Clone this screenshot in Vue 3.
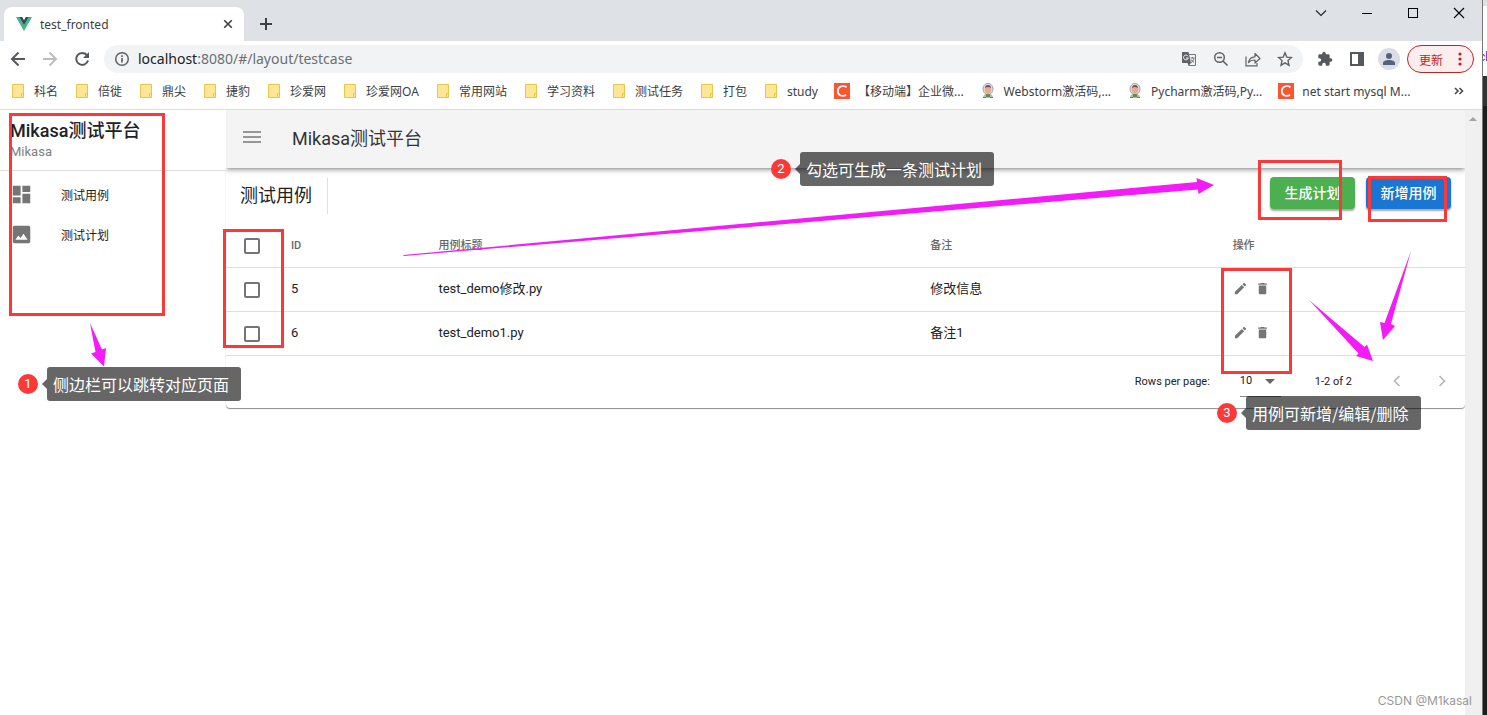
<script setup>
import { ref } from 'vue'

const bookmarks = [
  { kind: 'folder', label: '科名' },
  { kind: 'folder', label: '倍徙' },
  { kind: 'folder', label: '鼎尖' },
  { kind: 'folder', label: '捷豹' },
  { kind: 'folder', label: '珍爱网' },
  { kind: 'folder', label: '珍爱网OA' },
  { kind: 'folder', label: '常用网站' },
  { kind: 'folder', label: '学习资料' },
  { kind: 'folder', label: '测试任务' },
  { kind: 'folder', label: '打包' },
  { kind: 'folder', label: 'study' },
  { kind: 'csdn', label: '【移动端】企业微...' },
  { kind: 'avatar', label: 'Webstorm激活码,...' },
  { kind: 'avatar', label: 'Pycharm激活码,Py...' },
  { kind: 'csdn', label: 'net start mysql M...' },
]

const rows = ref([
  { id: 5, title: 'test_demo修改.py', remark: '修改信息', checked: false },
  { id: 6, title: 'test_demo1.py', remark: '备注1', checked: false },
])
const allChecked = ref(false)
const url = ref('localhost:8080/#/layout/testcase')
const perPage = ref('10')
</script>

<template>
  <div class="desktop">
    <div class="browser">
      <header class="tabstrip">
        <div class="tab">
          <svg class="vue-logo" viewBox="0 0 16 14" aria-hidden="true">
            <path fill="#41b883" d="M0 0h3.2L8 8.3 12.8 0H16L8 14z" />
            <path fill="#35495e" d="M3.2 0h3L8 3.2 9.800 0h3L8 8.300z" />
          </svg>
          <span class="tab-title">test_fronted</span>
          <button class="plain" aria-label="关闭标签页">
            <svg class="i16" viewBox="0 0 16 16"><path d="M4.200 4.200l7.600 7.600M11.800 4.200l-7.600 7.600" stroke="#3c4043" stroke-width="1.600" /></svg>
          </button>
        </div>
        <button class="plain new-tab" aria-label="新标签页">
          <svg class="i16" viewBox="0 0 16 16"><path d="M8 2v12M2 8h12" stroke="#3c4043" stroke-width="2" /></svg>
        </button>
        <div class="window-buttons">
          <button class="plain" aria-label="搜索标签页"><svg class="i16" viewBox="0 0 16 16"><path d="M3 5.500l5 5 5-5" fill="none" stroke="#222" stroke-width="1.100" /></svg></button>
          <button class="plain" aria-label="最小化"><svg class="i16" viewBox="0 0 16 16"><path d="M3 8.500h10" stroke="#000" /></svg></button>
          <button class="plain" aria-label="最大化"><svg class="i16" viewBox="0 0 16 16"><rect x="3.500" y="3.500" width="9" height="9" fill="none" stroke="#000" /></svg></button>
          <button class="plain" aria-label="关闭"><svg class="i16" viewBox="0 0 16 16"><path d="M3 3l10 10M13 3L3 13" stroke="#000" stroke-width="1.100" /></svg></button>
        </div>
      </header>

      <div class="toolbar">
        <button class="plain" aria-label="后退"><svg class="i16" viewBox="0 0 16 16"><path d="M15 8H2M8.500 1.500L2 8l6.500 6.500" fill="none" stroke="#55595e" stroke-width="2" /></svg></button>
        <button class="plain" aria-label="前进"><svg class="i16" viewBox="0 0 16 16"><path d="M1 8h13M7.500 1.500L14 8l-6.500 6.500" fill="none" stroke="#babcbe" stroke-width="2" /></svg></button>
        <button class="plain" aria-label="刷新"><svg class="i16" viewBox="0 0 16 16"><path d="M12.800 4A6 6 0 1 0 14 9.500" fill="none" stroke="#55595e" stroke-width="2" /><path d="M15 1v6H9z" fill="#55595e" /></svg></button>
        <div class="omnibox">
          <svg class="i16" viewBox="0 0 16 16" aria-hidden="true"><circle cx="8" cy="8" r="6.300" fill="none" stroke="#5f6368" stroke-width="1.500" /><path d="M8 7v4.500M8 4.300v1.600" stroke="#5f6368" stroke-width="1.700" /></svg>
          <label class="url"><span class="host">localhost</span><span>{{ url.slice(9) }}</span><input v-model="url" aria-label="地址栏" /></label>
          <div class="omni-actions">
            <button class="plain" aria-label="翻译此页">
              <svg class="i16" viewBox="0 0 16 16"><path d="M7 3.500h7.500v11H8" fill="none" stroke="#74787c" /><path d="M1 1h6.500l2.500 11H1z" fill="#5f6368" /><path d="M10 12l-2.500 3-1-3z" fill="#5f6368" /><path d="M7 5.200A2.400 2.400 0 1 0 7.300 7H5" fill="none" stroke="#f1f3f4" /><path d="M9.500 7h4M11.500 6v1M13 7.500c-.500 2-1.500 3-3 4.200M10.200 8.500c.600 1.300 1.700 2.300 3 3" fill="none" stroke="#5f6368" stroke-width=".9" /></svg>
            </button>
            <button class="plain" aria-label="缩放"><svg class="i16" viewBox="0 0 16 16"><circle cx="6.500" cy="6.500" r="4.800" fill="none" stroke="#5f6368" stroke-width="1.500" /><path d="M10 10l4.500 4.500M4 6.500h5" stroke="#5f6368" stroke-width="1.600" /></svg></button>
            <button class="plain" aria-label="分享"><svg class="i16" viewBox="0 0 16 16"><path d="M1 5.500v9.300h11V12" fill="none" stroke="#5f6368" stroke-width="1.200" /><path d="M3.500 11.500c.500-4 3-5.500 6.500-5.700V2.500l5 5-5 4.500V9c-3 0-5 .7-6.500 2.500z" fill="none" stroke="#5f6368" stroke-width="1.200" stroke-linejoin="round" /></svg></button>
            <button class="plain" aria-label="收藏"><svg class="i16" viewBox="0 0 16 16"><path d="M8 1.800l1.800 4.300 4.700.4-3.500 3.100 1 4.600L8 11.800l-4 2.400 1-4.600L1.500 6.500l4.700-.4z" fill="none" stroke="#5f6368" stroke-width="1.400" /></svg></button>
          </div>
        </div>
        <div class="tool-actions">
          <button class="plain" aria-label="扩展程序"><svg class="i16" viewBox="0 0 24 24"><path fill="#55595e" d="M20.500 11H19V7c0-1.100-.9-2-2-2h-4V3.500a2.500 2.500 0 0 0-5 0V5H4c-1.100 0-2 .9-2 2v3.800h1.500a2.700 2.700 0 0 1 0 5.400H2V20c0 1.100.9 2 2 2h3.800v-1.500a2.700 2.700 0 0 1 5.400 0V22H17c1.100 0 2-.9 2-2v-4h1.500a2.500 2.500 0 0 0 0-5z" /></svg></button>
          <button class="plain" aria-label="侧边栏"><svg class="i16" viewBox="0 0 16 16"><path fill="#55595e" fill-rule="evenodd" d="M1 1h14v14H1zM3 3v10h6V3z" /></svg></button>
          <button class="plain profile" aria-label="用户"><svg class="i16" viewBox="0 0 16 16"><circle cx="8" cy="5" r="3" fill="#56627a" /><path d="M2 14v-2c0-2 3-3 6-3s6 1 6 3v2z" fill="#56627a" /></svg></button>
          <button class="update">更新<svg class="dots" viewBox="0 0 4 14" aria-hidden="true"><circle cx="2" cy="2" r="1.600" /><circle cx="2" cy="7" r="1.600" /><circle cx="2" cy="12" r="1.600" /></svg></button>
        </div>
      </div>

      <nav class="bookmarks" aria-label="书签">
        <a v-for="b in bookmarks" :key="b.label" href="#" class="bookmark">
          <svg v-if="b.kind === 'folder'" class="i16" viewBox="0 0 16 16"><path d="M2.500 1.500h11v13h-11z" fill="#ffe694" stroke="#e8c64a" /><path d="M11.500 10.500h2v4h-2z" fill="#ffe694" stroke="#e8c64a" /></svg>
          <svg v-else-if="b.kind === 'csdn'" class="i16" viewBox="0 0 16 16"><path d="M0 0h16v16H0z" fill="#fc5531" /><path d="M12.500 4.200C9 1.800 3.800 3.200 3.800 8.200c0 4.500 4.700 5.700 8.300 3.800" fill="none" stroke="#fff" stroke-width="1.700" /></svg>
          <svg v-else class="i16" viewBox="0 0 16 16"><ellipse cx="8" cy="6" rx="5" ry="5.700" fill="#dcdcde" stroke="#a5a5ab" /><ellipse cx="8" cy="6.500" rx="3.200" ry="4" fill="#e8ab8c" /><path d="M5 5c0-4 6-4 6 0-2-1.500-4-1.500-6 0z" fill="#654f68" /><path d="M3 15c0-3 2-4.500 5-4.500s5 1.500 5 4.500z" fill="#b4bcb0" /><path d="M6 11h4v3H6z" fill="#648b54" /><path d="M3 14.500h3M10 14.500h3" stroke="#777" /></svg>
          <span>{{ b.label }}</span>
        </a>
        <button class="plain more" aria-label="更多书签"><svg class="i16" viewBox="0 0 16 16"><path d="M4 5l3 3-3 3M8.500 5l3 3-3 3" fill="none" stroke="#45494d" stroke-width="1.600" /></svg></button>
      </nav>

      <div class="viewport">
        <aside class="sidebar">
          <div class="brand">
            <h1>Mikasa测试平台</h1>
            <p>Mikasa</p>
          </div>
          <nav class="menu">
            <a href="#"><svg viewBox="0 0 24 24" aria-hidden="true"><path d="M2 2h9v11H2zM13 2h9v7h-9zM13 11h9v11h-9zM2 15h9v7H2z" /></svg>测试用例</a>
            <a href="#"><svg viewBox="0 0 24 24" aria-hidden="true"><path fill-rule="evenodd" d="M4 2h16c1.100 0 2 .9 2 2v16c0 1.100-.9 2-2 2H4c-1.100 0-2-.9-2-2V4c0-1.100.9-2 2-2zm4.300 11L5 18h14l-4.700-7-3.500 5z" /></svg>测试计划</a>
          </nav>
        </aside>

        <main class="main">
          <header class="appbar">
            <button class="plain" aria-label="菜单"><svg class="burger" viewBox="0 0 18 14"><path d="M0 2h18M0 7h18M0 12h18" stroke="#777" stroke-width="1.500" /></svg></button>
            <span>Mikasa测试平台</span>
          </header>

          <section class="card">
            <div class="card-head">
              <h2>测试用例</h2>
              <div class="card-actions">
                <button class="btn green">生成计划</button>
                <button class="btn blue">新增用例</button>
              </div>
            </div>

            <table>
              <colgroup><col class="c-check" /><col class="c-id" /><col class="c-title" /><col class="c-remark" /><col /></colgroup>
              <thead>
                <tr>
                  <th class="check"><input v-model="allChecked" type="checkbox" aria-label="全选" /></th>
                  <th>ID</th><th>用例标题</th><th>备注</th><th>操作</th>
                </tr>
              </thead>
              <tbody>
                <tr v-for="r in rows" :key="r.id">
                  <td class="check"><input v-model="r.checked" type="checkbox" :aria-label="'选择 ' + r.id" /></td>
                  <td>{{ r.id }}</td>
                  <td>{{ r.title }}</td>
                  <td>{{ r.remark }}</td>
                  <td>
                    <div class="ops">
                      <button class="plain" aria-label="编辑"><svg viewBox="0 0 24 24"><path d="M3 17.200V21h3.800L17.800 9.900l-3.700-3.700zM20.700 7c.4-.4.4-1 0-1.400l-2.300-2.300c-.4-.4-1-.4-1.400 0l-1.800 1.800 3.700 3.700z" /></svg></button>
                      <button class="plain" aria-label="删除"><svg viewBox="0 0 24 24"><path d="M6 19c0 1.100.9 2 2 2h8c1.100 0 2-.9 2-2V7H6zM19 4h-3.500l-1-1h-5l-1 1H5v2h14z" /></svg></button>
                    </div>
                  </td>
                </tr>
              </tbody>
            </table>

            <footer class="pager">
              <label for="per-page">Rows per page:</label>
              <div class="select">
                <select id="per-page" v-model="perPage"><option>10</option><option>25</option></select>
                <svg viewBox="0 0 10 5" aria-hidden="true"><path d="M0 0h10L5 5z" fill="#666" /></svg>
              </div>
              <span class="range">1-2 of 2</span>
              <div class="pages">
                <button class="plain" aria-label="上一页" disabled><svg class="i16" viewBox="0 0 16 16"><path d="M10.500 3L5.500 8l5 5" fill="none" stroke="#b5b5b5" stroke-width="1.600" /></svg></button>
                <button class="plain" aria-label="下一页" disabled><svg class="i16" viewBox="0 0 16 16"><path d="M5.500 3l5 5-5 5" fill="none" stroke="#b5b5b5" stroke-width="1.600" /></svg></button>
              </div>
            </footer>
          </section>
        </main>

        <div class="scrollbar"><svg viewBox="0 0 8 5" aria-hidden="true"><path d="M0 5l4-4 4 4z" fill="#a3a3a3" /></svg></div>
      </div>
    </div>

    <div class="behind" aria-hidden="true">
      <div class="behind-top"><span>ch</span></div>
      <div class="behind-dark"></div>
    </div>

    <div class="box box-menu"></div>
    <div class="box box-checks"></div>
    <div class="box box-plan"></div>
    <div class="box box-new"></div>
    <div class="box box-ops"></div>

    <svg class="arrows" width="1487" height="715" viewBox="0 0 1487 715" aria-hidden="true">
      <g fill="#f31bf7">
        <path d="M90 323L102 349.500 106 348 104 366.500 91 353.500 95.500 352z" />
        <path d="M403 255L1197 182 1196.500 178 1214 185 1198.500 194 1198 189.500 404 256z" />
        <path d="M1309 300L1364.500 347 1367 344.500 1373 361 1356 356 1358.500 353.500z" />
        <path d="M1411 251L1391 324 1395 326 1383 340 1380 322 1384.500 323z" />
      </g>
    </svg>

    <div class="note note-1"><b>1</b><span>侧边栏可以跳转对应页面</span></div>
    <div class="note note-2"><b>2</b><span>勾选可生成一条测试计划</span></div>
    <div class="note note-3"><b>3</b><span>用例可新增/编辑/删除</span></div>
    <div class="watermark">CSDN @M1kasal</div>
  </div>
</template>

<style>
body {
  margin: 0;
}
</style>

<style scoped>
.desktop {
  position: relative;
  display: flex;
  min-height: 100vh;
  overflow: hidden;
  background: #fff;
  color: #202124;
  font-family: Roboto, "Noto Sans CJK SC", sans-serif;
}
.desktop *,
.desktop *::before {
  box-sizing: border-box;
}
svg {
  display: block;
  flex: none;
}
a {
  color: inherit;
  text-decoration: none;
}
.plain {
  display: flex;
  align-items: center;
  justify-content: center;
  padding: 0;
  border: 0;
  background: none;
}
.i16 {
  width: 16px;
  height: 16px;
}
.browser {
  flex: 1;
  min-width: 0;
  display: flex;
  flex-direction: column;
}

/* Browser chrome */
.tabstrip,
.toolbar,
.bookmarks {
  font-family: "Noto Sans", "Noto Sans CJK SC", sans-serif;
}
.tabstrip {
  display: flex;
  align-items: flex-end;
  height: 41px;
  padding-left: 4px;
  background: #dee1e6;
}
.tab {
  display: flex;
  align-items: center;
  gap: 8px;
  width: 240px;
  height: 34px;
  padding: 0 8px 0 12px;
  border-radius: 8px 8px 0 0;
  background: #fff;
  font-size: 12px;
}
.vue-logo {
  width: 16px;
  height: 14px;
}
.tab-title {
  flex: 1;
  color: #3c4043;
}
.new-tab {
  height: 34px;
  margin-left: 14px;
}
.window-buttons {
  display: flex;
  align-self: flex-start;
  gap: 30px;
  margin-left: auto;
  padding: 5px 15px 0 0;
}
.toolbar {
  display: flex;
  align-items: center;
  gap: 16px;
  height: 36px;
  padding: 0 8px 0 10px;
}
.omnibox {
  flex: 1;
  display: flex;
  align-items: center;
  gap: 8px;
  height: 28px;
  margin-left: -2px;
  padding: 0 10px;
  border-radius: 14px;
  background: #f1f3f4;
}
.url {
  position: relative;
  flex: 1;
  font-size: 14px;
  line-height: 20px;
  color: #6b6f74;
}
.url input {
  position: absolute;
  inset: 0;
  width: 100%;
  padding: 0;
  border: 0;
  background: none;
  color: transparent;
  font: inherit;
}
.host {
  color: #202124;
}
.omni-actions {
  display: flex;
  gap: 16px;
}
.tool-actions {
  display: flex;
  align-items: center;
  gap: 16px;
  margin-left: -2px;
}
.profile {
  width: 22px;
  height: 22px;
  margin: 0 -9px 0 -3px;
  border-radius: 50%;
  background: #dadde3;
}
.update {
  display: flex;
  align-items: center;
  justify-content: space-between;
  width: 67px;
  height: 28px;
  padding: 0 11px;
  border: 1px solid #c5221f;
  border-radius: 14px;
  background: #fceeee;
  color: #c5221f;
  font: 12px "Noto Sans CJK SC", sans-serif;
}
.dots {
  width: 4px;
  height: 14px;
  fill: #c5221f;
}
.bookmarks {
  display: flex;
  align-items: center;
  gap: 16px;
  height: 33px;
  padding: 0 15px 4px 10px;
  border-bottom: 1px solid #dadce0;
  font-size: 12px;
  line-height: 18px;
  color: #3c4043;
}
.bookmark {
  display: flex;
  align-items: center;
  gap: 8px;
  white-space: nowrap;
}
.bookmark span {
  padding-top: 1px;
}
.more {
  margin-left: auto;
}

/* Page */
.viewport {
  flex: 1;
  display: flex;
}
.sidebar {
  width: 226px;
}
.brand {
  height: 61px;
  padding: 8px 10px 0;
  border-bottom: 1px solid #dedede;
}
h1,
h2,
p {
  margin: 0;
}
h1 {
  font-size: 18px;
  font-weight: 500;
  line-height: 26px;
}
.brand p {
  font-size: 13px;
  line-height: 16px;
  color: #808080;
}
.menu {
  padding-top: 4px;
}
.menu a {
  display: flex;
  align-items: center;
  gap: 29px;
  height: 40px;
  padding: 0 11px 2px;
  font-size: 12px;
}
.menu svg {
  width: 21px;
  height: 21px;
  fill: #757575;
}
.main {
  flex: 1;
  min-width: 0;
}
.appbar {
  position: relative;
  display: flex;
  align-items: center;
  gap: 31px;
  height: 58px;
  padding: 0 17px 4px;
  background: #f4f4f4;
  box-shadow: 0 2px 4px -1px rgba(0, 0, 0, 0.4), 0 4px 5px rgba(0, 0, 0, 0.1);
  clip-path: inset(0 0 -10px 0);
  font-size: 18px;
  color: #333;
}
.burger {
  width: 18px;
  height: 14px;
}
.card {
  border-radius: 0 0 4px 4px;
  box-shadow: 0 1px 1px rgba(0, 0, 0, 0.45);
}
.card-head {
  display: flex;
  align-items: center;
  height: 56px;
  padding: 0 14px;
}
h2 {
  padding-right: 15px;
  border-right: 1px solid #dedede;
  font-size: 18px;
  font-weight: 400;
  line-height: 36px;
}
.card-actions {
  display: flex;
  gap: 11px;
  margin-left: auto;
  padding-bottom: 6px;
}
.btn {
  width: 85px;
  height: 32px;
  padding: 0 0 2px;
  border: 0;
  border-radius: 4px;
  box-shadow: 0 2px 2px rgba(0, 0, 0, 0.35);
  color: #fff;
  font: 500 14px Roboto, "Noto Sans CJK SC", sans-serif;
}
.green {
  background: #4caf50;
}
.blue {
  background: #1976d2;
}
table {
  width: 100%;
  table-layout: fixed;
  border-collapse: separate;
  border-spacing: 0;
}
.c-check {
  width: 50px;
}
.c-id {
  width: 11.9%;
}
.c-title {
  width: 39.7%;
}
.c-remark {
  width: 24.4%;
}
th,
td {
  height: 44px;
  padding: 0 15px;
  border-bottom: 1px solid #dedede;
  text-align: left;
  font-size: 13px;
  line-height: 20px;
}
td {
  padding-bottom: 2px;
}
th {
  font-size: 11px;
  font-weight: 500;
  color: #666;
}
.check {
  padding: 0 0 0 18px;
}
.check input {
  display: block;
  width: 16px;
  height: 16px;
  margin: 0;
  appearance: none;
  border: 2px solid #757575;
  border-radius: 2px;
  background: #fff;
}
.check input:checked {
  background: #1976d2;
}
.ops {
  display: flex;
  gap: 7px;
}
.ops svg {
  width: 15px;
  height: 15px;
  fill: #757575;
}
.pager {
  display: flex;
  align-items: center;
  justify-content: flex-end;
  height: 52px;
  padding: 0 15px 2px;
  font-size: 11px;
}
.select {
  position: relative;
  margin: 0 34px 0 30px;
}
.select select {
  display: block;
  width: 41px;
  height: 32px;
  padding: 0;
  appearance: none;
  border: 0;
  border-bottom: 1px solid #888;
  background: none;
  color: #202124;
  font: inherit;
}
.select svg {
  position: absolute;
  top: 14px;
  right: 6px;
  width: 10px;
  height: 5px;
}
.pages {
  display: flex;
  gap: 29px;
  margin-left: 37px;
}
.scrollbar {
  width: 17px;
  padding: 6px 4px;
  background: #f0f0f0;
}
.scrollbar svg {
  width: 8px;
  height: 5px;
}

/* Window behind the browser */
.behind {
  display: flex;
  flex-direction: column;
  width: 5px;
  overflow: hidden;
  border-left: 1px solid #777;
}
.behind-top {
  height: 76px;
  padding-top: 43px;
  border-top: 6px solid #dee1e6;
  background: #fff;
  color: #6a1b9a;
  font-size: 12px;
  line-height: 16px;
}
.behind-top span {
  display: block;
  margin-left: -4px;
}
.behind-dark {
  flex: 1;
  border-top: 30px solid #333;
  background: #1d1d1d;
}

/* Annotations over the page */
.box {
  position: absolute;
  border: 3px solid #fc3938;
}
.box-menu {
  left: 9px;
  top: 113px;
  width: 156px;
  height: 203px;
}
.box-checks {
  left: 223px;
  top: 229px;
  width: 61px;
  height: 119px;
}
.box-plan {
  left: 1258px;
  top: 160px;
  width: 84px;
  height: 60px;
}
.box-new {
  left: 1368px;
  top: 176px;
  width: 79px;
  height: 46px;
}
.box-ops {
  left: 1221px;
  top: 268px;
  width: 71px;
  height: 106px;
}
.arrows {
  position: absolute;
  left: 0;
  top: 0;
  pointer-events: none;
}
.note {
  position: absolute;
  display: flex;
  align-items: center;
  gap: 9px;
  color: #fff;
  white-space: nowrap;
}
.note b {
  width: 20px;
  border-radius: 50%;
  background: #fc3938;
  font-size: 13px;
  font-weight: 400;
  line-height: 20px;
  text-align: center;
}
.note span {
  position: relative;
  padding: 0 12px 0 6px;
  border-radius: 3px;
  background: rgba(0, 0, 0, 0.6);
  font-family: "Noto Sans CJK SC", sans-serif;
  font-size: 16px;
  line-height: 34px;
}
.note span::before {
  content: "";
  position: absolute;
  left: -5px;
  top: 12px;
  border: 5px solid transparent;
  border-left: 0;
  border-right-color: rgba(0, 0, 0, 0.6);
}
.note-1 {
  left: 18px;
  top: 367px;
}
.note-2 {
  left: 771px;
  top: 152px;
}
.note-3 {
  left: 1217px;
  top: 396px;
}
.watermark {
  position: absolute;
  right: 15px;
  bottom: 6px;
  color: #999;
  font: 12px/16px Inter, sans-serif;
}
</style>
